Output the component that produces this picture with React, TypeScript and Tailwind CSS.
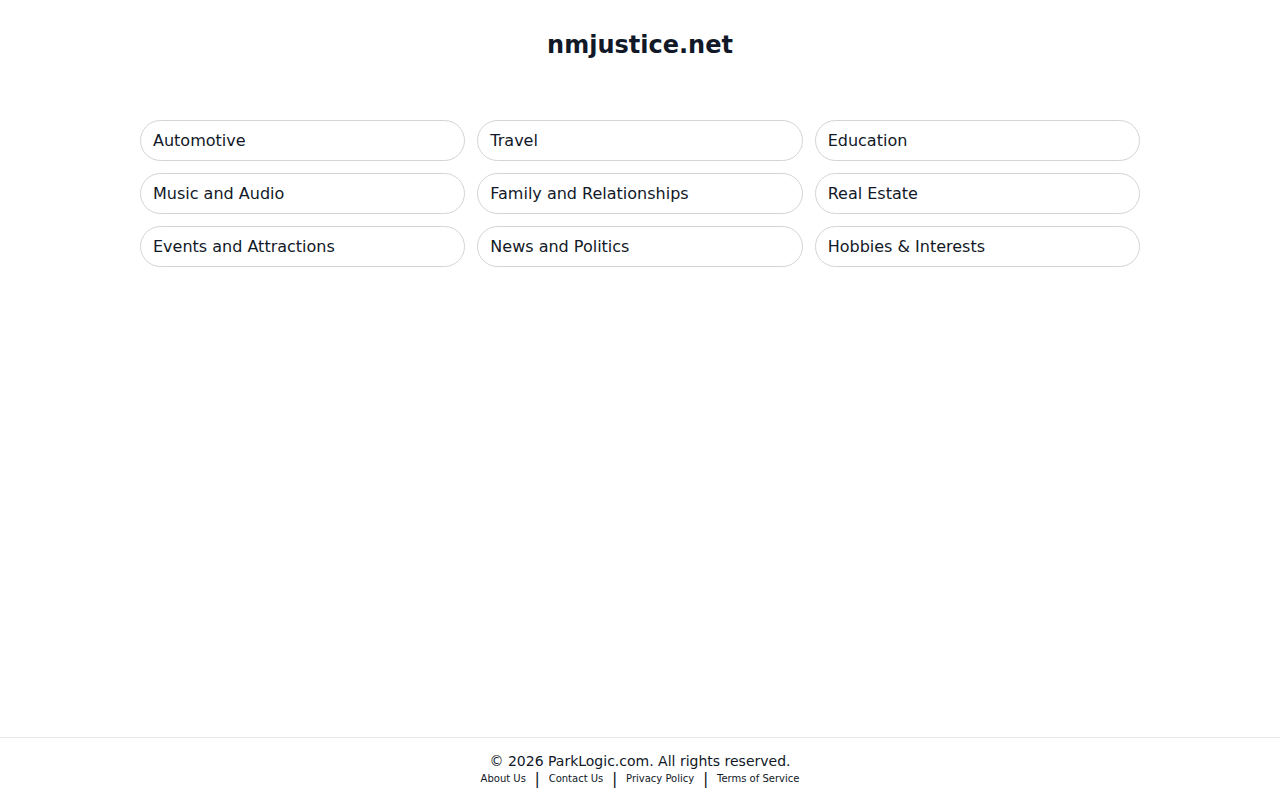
const CATEGORIES = [
  "Automotive",
  "Travel",
  "Education",
  "Music and Audio",
  "Family and Relationships",
  "Real Estate",
  "Events and Attractions",
  "News and Politics",
  "Hobbies & Interests",
];

const LINKS = ["About Us", "Contact Us", "Privacy Policy", "Terms of Service"];

export default function App() {
  return (
    <div
      className="min-h-screen flex flex-col bg-white text-[#111827]"
      style={{ fontFamily: '"DejaVu Sans", Verdana, sans-serif' }}
    >
      <main className="flex-1">
        <h1 className="pt-[31px] text-center text-[24px] leading-[28px] font-bold">nmjustice.net</h1>
        <div className="mx-auto mt-[61px] w-[1000px] grid grid-cols-3 gap-x-3 gap-y-[12px]">
          {CATEGORIES.map((c) => (
            <a
              key={c}
              href="#"
              className="h-[41px] flex items-center px-[12px] rounded-full border border-[#d4d4d8] text-[16px] text-[#111827]"
            >
              {c}
            </a>
          ))}
        </div>
      </main>
      <footer className="border-t border-[#e5e7eb] pt-[15px] pb-[12px] text-center">
        <p className="text-[14px] leading-[17px]">© 2026 ParkLogic.com. All rights reserved.</p>
        <div className="flex justify-center items-center text-[10px] leading-[18px]">
          {LINKS.map((l, i) => (
            <span key={l} className="flex items-center">
              {i > 0 && <span className="mx-[8.7px] text-[16px] leading-[16px]">|</span>}
              <a href="#">{l}</a>
            </span>
          ))}
        </div>
      </footer>
    </div>
  );
}
